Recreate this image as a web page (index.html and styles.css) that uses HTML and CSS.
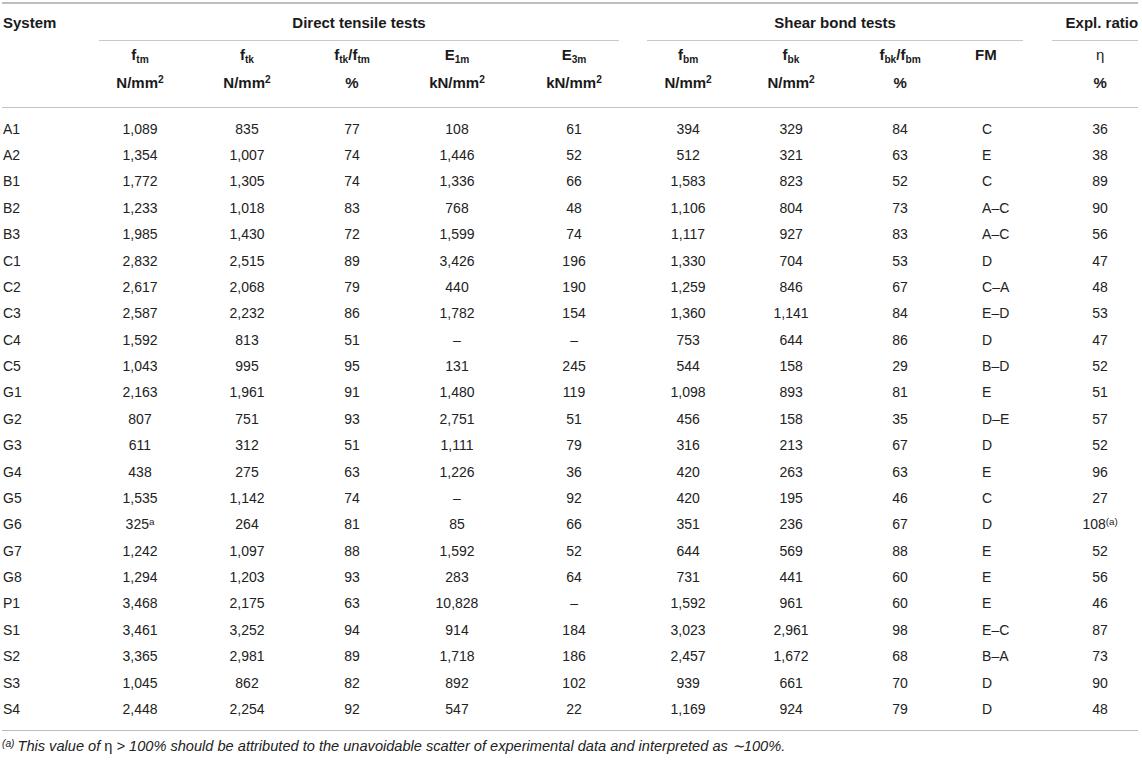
FILE: index.html
```html
<!DOCTYPE html>
<html>
  <head>
    <meta charset="UTF-8" />
    <title>Direct tensile and shear bond tests</title>
    <link rel="stylesheet" href="styles.css">
  </head>
  <body>
    <table class="data-table">
      <colgroup>
        <col class="w-system" />
        <col class="w-ftm" />
        <col class="w-ftk" />
        <col class="w-ratio1" />
        <col class="w-e1m" />
        <col class="w-e3m" />
        <col class="w-fbm" />
        <col class="w-fbk" />
        <col class="w-ratio2" />
        <col class="w-fm" />
        <col class="w-eta" />
      </colgroup>
      <thead>
        <!-- group headings -->
        <tr>
          <th class="col-system" rowspan="2">System</th>
          <th class="group-cell" colspan="5"><div class="group group-direct">Direct tensile tests</div></th>
          <th class="group-cell" colspan="4"><div class="group group-shear">Shear bond tests</div></th>
          <th class="group-cell"><div class="group group-expl">Expl. ratio</div></th>
        </tr>
        <!-- quantities and units -->
        <tr class="sub">
          <th>f<sub>tm</sub><br />N/mm<sup>2</sup></th>
          <th>f<sub>tk</sub><br />N/mm<sup>2</sup></th>
          <th>f<sub>tk</sub>/f<sub>tm</sub><br />%</th>
          <th>E<sub>1m</sub><br />kN/mm<sup>2</sup></th>
          <th>E<sub>3m</sub><br />kN/mm<sup>2</sup></th>
          <th>f<sub>bm</sub><br />N/mm<sup>2</sup></th>
          <th>f<sub>bk</sub><br />N/mm<sup>2</sup></th>
          <th>f<sub>bk</sub>/f<sub>bm</sub><br />%</th>
          <th class="fm-head">FM</th>
          <th><span class="eta">η</span><br />%</th>
        </tr>
      </thead>
      <tbody>
        <tr><td class="sys">A1</td><td>1,089</td><td>835</td><td>77</td><td>108</td><td>61</td><td>394</td><td>329</td><td>84</td><td class="fm">C</td><td>36</td></tr>
        <tr><td class="sys">A2</td><td>1,354</td><td>1,007</td><td>74</td><td>1,446</td><td>52</td><td>512</td><td>321</td><td>63</td><td class="fm">E</td><td>38</td></tr>
        <tr><td class="sys">B1</td><td>1,772</td><td>1,305</td><td>74</td><td>1,336</td><td>66</td><td>1,583</td><td>823</td><td>52</td><td class="fm">C</td><td>89</td></tr>
        <tr><td class="sys">B2</td><td>1,233</td><td>1,018</td><td>83</td><td>768</td><td>48</td><td>1,106</td><td>804</td><td>73</td><td class="fm">A–C</td><td>90</td></tr>
        <tr><td class="sys">B3</td><td>1,985</td><td>1,430</td><td>72</td><td>1,599</td><td>74</td><td>1,117</td><td>927</td><td>83</td><td class="fm">A–C</td><td>56</td></tr>
        <tr><td class="sys">C1</td><td>2,832</td><td>2,515</td><td>89</td><td>3,426</td><td>196</td><td>1,330</td><td>704</td><td>53</td><td class="fm">D</td><td>47</td></tr>
        <tr><td class="sys">C2</td><td>2,617</td><td>2,068</td><td>79</td><td>440</td><td>190</td><td>1,259</td><td>846</td><td>67</td><td class="fm">C–A</td><td>48</td></tr>
        <tr><td class="sys">C3</td><td>2,587</td><td>2,232</td><td>86</td><td>1,782</td><td>154</td><td>1,360</td><td>1,141</td><td>84</td><td class="fm">E–D</td><td>53</td></tr>
        <tr><td class="sys">C4</td><td>1,592</td><td>813</td><td>51</td><td>–</td><td>–</td><td>753</td><td>644</td><td>86</td><td class="fm">D</td><td>47</td></tr>
        <tr><td class="sys">C5</td><td>1,043</td><td>995</td><td>95</td><td>131</td><td>245</td><td>544</td><td>158</td><td>29</td><td class="fm">B–D</td><td>52</td></tr>
        <tr><td class="sys">G1</td><td>2,163</td><td>1,961</td><td>91</td><td>1,480</td><td>119</td><td>1,098</td><td>893</td><td>81</td><td class="fm">E</td><td>51</td></tr>
        <tr><td class="sys">G2</td><td>807</td><td>751</td><td>93</td><td>2,751</td><td>51</td><td>456</td><td>158</td><td>35</td><td class="fm">D–E</td><td>57</td></tr>
        <tr><td class="sys">G3</td><td>611</td><td>312</td><td>51</td><td>1,111</td><td>79</td><td>316</td><td>213</td><td>67</td><td class="fm">D</td><td>52</td></tr>
        <tr><td class="sys">G4</td><td>438</td><td>275</td><td>63</td><td>1,226</td><td>36</td><td>420</td><td>263</td><td>63</td><td class="fm">E</td><td>96</td></tr>
        <tr><td class="sys">G5</td><td>1,535</td><td>1,142</td><td>74</td><td>–</td><td>92</td><td>420</td><td>195</td><td>46</td><td class="fm">C</td><td>27</td></tr>
        <tr><td class="sys">G6</td><td>325<sup class="note">a</sup></td><td>264</td><td>81</td><td>85</td><td>66</td><td>351</td><td>236</td><td>67</td><td class="fm">D</td><td>108<sup class="note">(a)</sup></td></tr>
        <tr><td class="sys">G7</td><td>1,242</td><td>1,097</td><td>88</td><td>1,592</td><td>52</td><td>644</td><td>569</td><td>88</td><td class="fm">E</td><td>52</td></tr>
        <tr><td class="sys">G8</td><td>1,294</td><td>1,203</td><td>93</td><td>283</td><td>64</td><td>731</td><td>441</td><td>60</td><td class="fm">E</td><td>56</td></tr>
        <tr><td class="sys">P1</td><td>3,468</td><td>2,175</td><td>63</td><td>10,828</td><td>–</td><td>1,592</td><td>961</td><td>60</td><td class="fm">E</td><td>46</td></tr>
        <tr><td class="sys">S1</td><td>3,461</td><td>3,252</td><td>94</td><td>914</td><td>184</td><td>3,023</td><td>2,961</td><td>98</td><td class="fm">E–C</td><td>87</td></tr>
        <tr><td class="sys">S2</td><td>3,365</td><td>2,981</td><td>89</td><td>1,718</td><td>186</td><td>2,457</td><td>1,672</td><td>68</td><td class="fm">B–A</td><td>73</td></tr>
        <tr><td class="sys">S3</td><td>1,045</td><td>862</td><td>82</td><td>892</td><td>102</td><td>939</td><td>661</td><td>70</td><td class="fm">D</td><td>90</td></tr>
        <tr><td class="sys">S4</td><td>2,448</td><td>2,254</td><td>92</td><td>547</td><td>22</td><td>1,169</td><td>924</td><td>79</td><td class="fm">D</td><td>48</td></tr>
      </tbody>
    </table>

    <p class="footnote"><sup>(a)</sup>This value of <span class="eta-note">η</span> &gt; 100% should be attributed to the unavoidable scatter of experimental data and interpreted as ∼100%.</p>
  </body>
</html>
```

FILE: styles.css
```css
body {
  margin: 0;
  font-family: "Liberation Sans", Arial, sans-serif;
  color: #222;
  background: #fff;
}

.data-table {
  table-layout: fixed;
  width: 1136px;
  margin: 2px 0 0 2px;
  border-collapse: separate;
  border-spacing: 0;
  border-top: 2px solid #bdbdbd;
  border-bottom: 1px solid #bdbdbd;
}

/* column widths */
.w-system { width: 86px; }
.w-ftm { width: 104px; }
.w-ftk { width: 110px; }
.w-ratio1 { width: 100px; }
.w-e1m { width: 110px; }
.w-e3m { width: 124px; }
.w-fbm { width: 104px; }
.w-fbk { width: 102px; }
.w-ratio2 { width: 116px; }
.w-fm { width: 104px; }
.w-eta { width: 76px; }

th {
  font-size: 15px;
  font-weight: bold;
  color: #1a1a1a;
  text-align: center;
  vertical-align: top;
  padding: 0;
  white-space: nowrap;
}

.col-system {
  text-align: left;
  padding: 9.8px 0 0 1px;
  line-height: 18px;
  border-bottom: 1px solid #c4c4c4;
}

.group {
  padding: 9.8px 0 8.2px;
  line-height: 18px;
  border-bottom: 1px solid #c8c8c8;
}
.group-direct { margin: 0 17px 0 11px; }
.group-shear { margin: 0 39px 0 11px; }
.group-expl { margin-left: -10px; text-align: right; }

.sub th {
  line-height: 28px;
  padding: 0 0 10px;
  border-bottom: 1px solid #c4c4c4;
}
.sub th.fm-head {
  text-align: left;
  padding-left: 17px;
}
.eta {
  font-weight: normal;
}

sub, sup {
  font-size: 0.68em;
  line-height: 0;
}
sub { vertical-align: -0.28em; }
sup { vertical-align: 0.45em; }

td {
  font-size: 14px;
  line-height: 17px;
  padding: 4.7px 0;
  text-align: center;
  white-space: nowrap;
}
td.sys {
  text-align: left;
  padding-left: 1px;
}
td.fm {
  text-align: left;
  padding-left: 24px;
}
tbody tr:first-child td { padding-top: 12.7px; }
tbody tr:last-child td { padding-bottom: 12.2px; }

.note {
  font-size: 0.7em;
}

.footnote {
  margin: 7.2px 0 0 2px;
  font-size: 14.6px;
  line-height: 17px;
  font-style: italic;
}
.footnote sup {
  font-size: 0.7em;
  margin-right: 3px;
}
.eta-note {
  font-style: normal;
}
```
